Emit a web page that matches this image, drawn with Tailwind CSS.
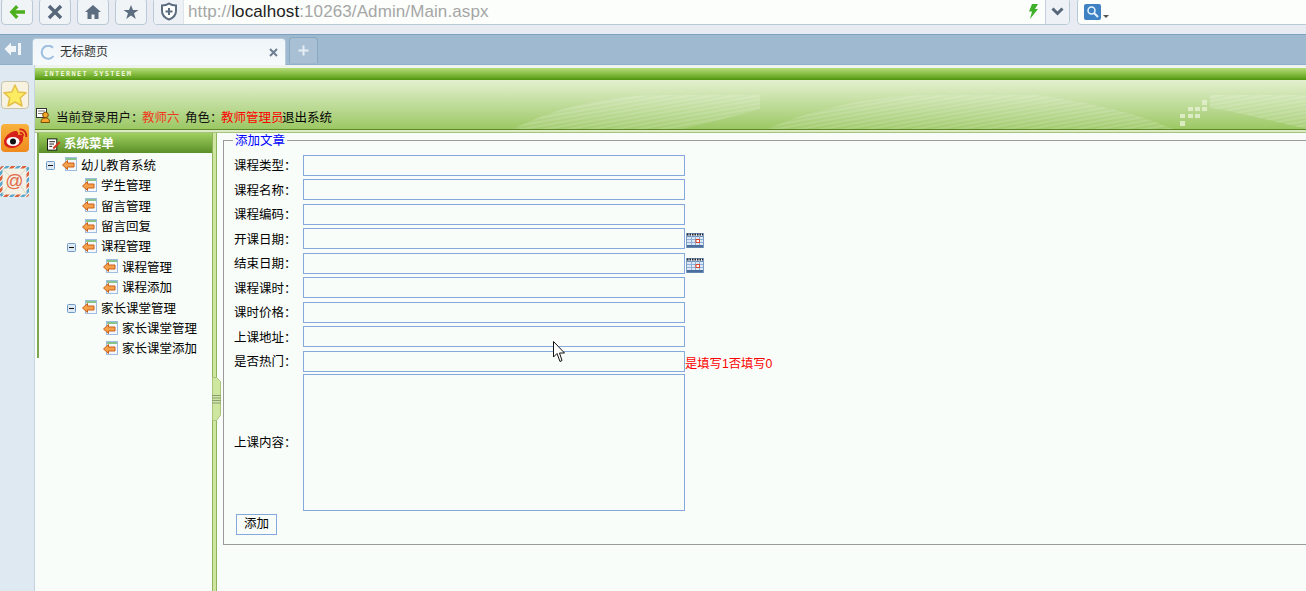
<!DOCTYPE html>
<html lang="zh-CN">
<head>
    <meta charset="UTF-8">
    <title>无标题页</title>
    <script src="https://cdn.jsdelivr.net/npm/@tailwindcss/browser@4"></script>
</head>
<body class="w-[1306px] h-[591px] overflow-hidden relative bg-[#f8fdf9] text-[12.5px] leading-[16px] text-black font-['Liberation_Sans','Noto_Sans_CJK_SC',sans-serif]">
    <svg class="hidden">
        <symbol id="tree-icon" viewBox="0 0 15 15">
            <rect x="3.500" y="0.500" width="11" height="13" fill="#f4f8fd" stroke="#9fbde0"/>
            <rect x="4" y="1" width="10" height="2" fill="#86c48a"/>
            <path d="M0.500 8 L5.500 3.500 V6 H12 V10 H5.500 V12.500 Z" fill="#f5a04a" stroke="#c9601a" stroke-width="1"/>
        </symbol>
        <symbol id="minus-box" viewBox="0 0 9 9">
            <rect x="0.500" y="0.500" width="8" height="8" rx="1" fill="#dfe9f4" stroke="#6f9ac8"/>
            <rect x="2" y="4" width="5" height="1" fill="#111"/>
        </symbol>
        <symbol id="calendar" viewBox="0 0 18 16">
            <rect x="0.500" y="1.500" width="17" height="14" fill="#dbe8f6" stroke="#7f9cc4"/>
            <path d="M1 2.500H17" stroke="#222" stroke-width="2" stroke-dasharray="1.500 1"/>
            <path d="M1 4.500H17" stroke="#6f8fbc"/>
            <path d="M1 7.500H17M1 10.500H17M5.500 4v11M9.500 4v11M13.500 4v11" stroke="#8fb0d8" fill="none"/>
            <rect x="10" y="7.500" width="3.500" height="3" fill="#fff" stroke="#d8452c"/>
            <rect x="1" y="13" width="16" height="2.500" fill="#4a6f9c"/>
        </symbol>
    </svg>

    <!-- browser toolbar -->
    <div class="h-[34px] bg-[#e8ecf2] flex items-start relative overflow-hidden">
        <div class="flex shrink-0 gap-[6px] pl-[1px] -mt-[2px]">
            <div class="w-[32px] h-[27px] rounded-[4px] border border-[#b9c9d8] bg-[#f1f4f7] flex items-center justify-center">
                <svg width="18" height="16" viewBox="0 0 18 16"><path d="M8 1 L1.500 8 L8 15 L10.500 12.500 L7.500 9.800 H17 V6.200 H7.500 L10.500 3.500 Z" fill="#4caf1e"/></svg>
            </div>
            <div class="w-[32px] h-[27px] rounded-[4px] border border-[#b9c9d8] bg-[#f1f4f7] flex items-center justify-center">
                <svg width="16" height="16" viewBox="0 0 16 16"><path d="M2 2 L14 14 M14 2 L2 14" stroke="#57677a" stroke-width="3.500"/></svg>
            </div>
            <div class="w-[32px] h-[27px] rounded-[4px] border border-[#b9c9d8] bg-[#f1f4f7] flex items-center justify-center">
                <svg width="18" height="16" viewBox="0 0 18 16"><path d="M9 1 L1 8 H3.500 V15 H7.500 V10.500 H10.500 V15 H14.500 V8 H17 Z" fill="#5d6d80"/></svg>
            </div>
            <div class="w-[32px] h-[27px] rounded-[4px] border border-[#b9c9d8] bg-[#f1f4f7] flex items-center justify-center">
                <svg width="16" height="16" viewBox="0 0 16 16"><path d="M8 1 L10 6 H15.500 L11 9.300 L12.800 15 L8 11.500 L3.200 15 L5 9.300 L0.500 6 H6 Z" fill="#5d6d80"/></svg>
            </div>
        </div>
        <div class="ml-[6px] -mt-[2px] shrink-0 w-[917px] h-[27px] rounded-[4px] border border-[#b9c9d8] bg-[#fbfefb] flex items-center overflow-hidden">
            <div class="w-[30px] h-full bg-[#eef2f6] flex items-center justify-center border-r border-[#dde4ea]">
                <svg width="18" height="19" viewBox="0 0 18 19"><path d="M9 1.500 C11 3 14 3.500 16 3.500 V9 C16 13 13 16 9 17.500 C5 16 2 13 2 9 V3.500 C4 3.500 7 3 9 1.500 Z" fill="#fff" stroke="#5d6d80" stroke-width="2"/><path d="M9 6 V13 M5.500 9.500 H12.500" stroke="#5d6d80" stroke-width="2"/></svg>
            </div>
            <div class="ml-[4px] text-[17px] leading-[22px] tracking-[0.1px] text-[#a6a6a6] whitespace-nowrap">http://<span class="text-[#222]">localhost</span>:10263/Admin/Main.aspx</div>
            <div class="ml-auto w-[25px] h-full flex items-center justify-center">
                <svg width="10" height="15" viewBox="0 0 10 15"><path d="M4 0 H10 L7 5 H10 L2 15 L4 7.500 H1 Z" fill="#3fb02a"/></svg>
            </div>
            <div class="w-[24px] h-full bg-[#eef2f6] border-l border-[#c3d0dc] flex items-center justify-center">
                <svg width="13" height="9" viewBox="0 0 13 9"><path d="M1.500 1.500 L6.500 6.500 L11.500 1.500" stroke="#57677a" stroke-width="3" fill="none"/></svg>
            </div>
        </div>
        <div class="ml-[7px] -mt-[2px] shrink-0 w-[240px] h-[27px] rounded-[4px] border border-[#b9c9d8] bg-[#fbfefb] flex items-center pl-[6px] gap-[2px]">
            <div class="w-[17px] h-[16px] rounded-[2px] bg-[#3f82c4] flex items-center justify-center">
                <svg width="13" height="13" viewBox="0 0 13 13"><circle cx="5.500" cy="5.500" r="3.500" fill="none" stroke="#e8f4ff" stroke-width="1.500"/><path d="M8 8 L12 12" stroke="#e8f4ff" stroke-width="2"/></svg>
            </div>
            <div class="mt-[10px] w-0 h-0 border-x-[3px] border-x-transparent border-t-[3px] border-t-[#555]"></div>
        </div>
    </div>

    <!-- tab strip -->
    <div class="h-[31px] bg-[#9fb9d0] border-t border-t-[#7ba0c0] border-b border-b-[#8db0cc] flex items-end relative">
        <div class="w-[32px] h-full flex items-center justify-center pb-[1px] pr-[6px]">
            <svg width="18" height="14" viewBox="0 0 18 14"><path d="M7 0.500 L0.500 7 L7 13.500 V10 H12 V4 H7 Z M14 1 H17 V13 H14 Z" fill="#f2f6f9"/></svg>
        </div>
        <div class="w-[254px] h-[27px] bg-gradient-to-b from-[#eff5f9] to-[#f6fafc] rounded-t-[4px] border border-b-0 border-[#b6cbdc] flex items-center pl-[7px] pr-[7px] -mb-[1px] text-[12px]">
            <svg width="15" height="15" viewBox="0 0 15 15"><path d="M13 2.800 A6.500 6.500 0 1 0 13.500 11" fill="none" stroke="#9fbfe0" stroke-width="2"/></svg>
            <span class="ml-[5px] text-[#333]">无标题页</span>
            <svg class="ml-auto" width="9" height="9" viewBox="0 0 9 9"><path d="M1 1 L8 8 M8 1 L1 8" stroke="#6d7f91" stroke-width="2"/></svg>
        </div>
        <div class="ml-[3px] w-[29px] h-[26px] bg-[#a9c0d4] rounded-t-[4px] border border-b-0 border-[#89a8c2] flex items-center justify-center mb-[1px]">
            <svg width="11" height="11" viewBox="0 0 11 11"><path d="M5.500 0.500 V10.500 M0.500 5.500 H10.500" stroke="#e6eef4" stroke-width="2"/></svg>
        </div>
    </div>

    <!-- window -->
    <div class="flex h-[526px]">
        <!-- side strip -->
        <div class="w-[35px] shrink-0 bg-[#dfe9f1] border-r border-[#c3d3e0] flex flex-col items-start pt-[16px] pl-[1px]">
            <div class="w-[28px] h-[28px] rounded-[4px] border border-[#c9c3ad] bg-[#f7f3e0] flex items-center justify-center">
                <svg width="24" height="23" viewBox="0 0 24 23"><path d="M12 1 L15.200 8 L23 8.800 L17.200 14 L19 22 L12 18 L5 22 L6.800 14 L1 8.800 L8.800 8 Z" fill="#fbec62" stroke="#e6bf4a" stroke-width="1.500" stroke-linejoin="round"/></svg>
            </div>
            <div class="mt-[15px] w-[28px] h-[28px] rounded-[4px] bg-gradient-to-b from-[#f8b23c] to-[#ef8a1e] flex items-center justify-center">
                <svg width="25" height="21" viewBox="0 0 25 21"><path d="M1 14 C1 9 7 3.500 12 3 C15 2.800 15.500 5 15 7 C18 6 20.500 7 20 10 C21 14 15 20 9.500 20 C5 20 1 18 1 14 Z" fill="#d6201a"/><ellipse cx="10" cy="13.500" rx="6.500" ry="4.500" fill="#fff"/><circle cx="10" cy="13.500" r="3" fill="#111"/><path d="M16.500 1.500 C21 1 24 4.500 23.200 9 M16.800 4.800 C18.800 4.500 20.500 6 20 8.200" stroke="#d6201a" stroke-width="1.800" fill="none"/></svg>
            </div>
            <svg class="mt-[14px] -ml-[1px]" width="29" height="31" viewBox="0 0 29 31">
                <defs>
                    <pattern id="airmail" width="8" height="8" patternUnits="userSpaceOnUse" patternTransform="rotate(45)">
                        <rect width="8" height="8" fill="#fff"/><rect width="3" height="8" fill="#d8603a"/><rect x="4" width="3" height="8" fill="#5aa5c8"/>
                    </pattern>
                </defs>
                <rect x="0" y="0" width="29" height="31" rx="3" fill="url(#airmail)"/>
                <rect x="2.500" y="2.500" width="24" height="26" fill="#f3f1e6"/>
                <path d="M3 3 L14.500 15 L26 3 M3 28 L12 14 M26 28 L17 14" fill="none" stroke="#dcd9c8"/>
                <text x="14.500" y="21" text-anchor="middle" font-size="18" font-family="Liberation Sans" fill="#e4694a">@</text>
            </svg>
        </div>

        <!-- page inside the browser -->
        <div class="flex-1 min-w-0 flex flex-col">
            <div class="h-[3px] bg-[#eef3ee]"></div>
            <div class="h-[12px] bg-gradient-to-b from-[#b4dc78] via-[#86bd40] to-[#4f9408] pl-[9px] flex items-center overflow-hidden">
                <span class="text-[7px] leading-[12px] font-bold tracking-[1.3px] text-[#eef6dc] font-['DejaVu_Sans_Mono',monospace]">INTERNET SYSTEEM</span>
            </div>
            <div class="h-[49px] relative bg-gradient-to-b from-[#e4f0cf] to-[#9cc863] flex items-end overflow-hidden">
                <svg class="absolute top-0 left-0" width="1271" height="49" viewBox="0 0 1271 49">
                    <defs>
                        <pattern id="stripes" width="14" height="4" patternUnits="userSpaceOnUse" patternTransform="rotate(-10)">
                            <rect width="14" height="2" fill="#ffffff" fill-opacity="0.12"/>
                        </pattern>
                    </defs>
                    <path d="M478 49 C520 28 570 15 630 15 H725 V29 C700 36 670 44 645 49 Z" fill="#ffffff" fill-opacity="0.1"/>
                    <path d="M478 49 C520 28 570 15 630 15 H725 V29 C700 36 670 44 645 49 Z" fill="url(#stripes)"/>
                    <path d="M732 49 C780 28 840 15 900 15 H1001 C1050 22 1100 32 1138 49 Z" fill="#ffffff" fill-opacity="0.08"/>
                    <path d="M732 49 C780 28 840 15 900 15 H1001 C1050 22 1100 32 1138 49 Z" fill="url(#stripes)"/>
                    <path d="M1175 15 H1271 V49 C1240 42 1205 32 1175 28 Z" fill="#ffffff" fill-opacity="0.12"/>
                    <path d="M1175 15 H1271 V49 C1240 42 1205 32 1175 28 Z" fill="url(#stripes)"/>
                    <g fill="#e4f0cf" fill-opacity="0.85">
                        <rect x="1167" y="20" width="5" height="5"/>
                        <rect x="1153" y="27" width="5" height="4"/><rect x="1160" y="27" width="5" height="4"/><rect x="1167" y="27" width="5" height="4"/>
                        <rect x="1145" y="34" width="5" height="4"/><rect x="1153" y="34" width="5" height="4"/><rect x="1160" y="34" width="5" height="4"/>
                        <rect x="1145" y="41" width="5" height="5"/>
                    </g>
                </svg>
                <div class="relative flex items-center h-[22px] whitespace-nowrap text-[#111]">
                    <svg class="ml-[1px] -mt-[5px]" width="14" height="15" viewBox="0 0 14 15"><rect x="0.500" y="0.500" width="10" height="9" fill="#fff" stroke="#333"/><path d="M2 3h7M2 5.500h5" stroke="#777"/><circle cx="9.500" cy="7" r="2.800" fill="#f4a72c" stroke="#7a4a00"/><path d="M5 14.500 C5 11 7 10 9.500 10 C12 10 13.500 11 13.500 14.500 Z" fill="#f4a72c" stroke="#7a4a00"/></svg>
                    <span class="ml-[6px]">当前登录用户：</span><span class="text-[#f0391c] -ml-[1.500px]">教师六</span><span class="ml-[5.500px]">角色：</span><span class="text-[#ff0000] -ml-[1.500px]">教师管理员</span><span class="-ml-[1.500px] text-black">退出系统</span>
                </div>
            </div>
            <div class="h-[4px] border-t border-t-[#5c8a2a] border-b border-b-[#a5c27f] bg-[#dcebc4]"></div>

            <div class="flex flex-1 min-h-0">
                <!-- tree menu -->
                <div class="w-[175px] shrink-0 h-[225px] ml-[2px] border-l-2 border-[#7ea84e]">
                    <div class="w-[173px] h-[20px] bg-gradient-to-b from-[#a0d060] to-[#5c9028] flex items-center pl-[8px] pt-[2px] gap-[3px] text-white font-bold">
                        <svg width="14" height="13" viewBox="0 0 15 13"><rect x="0.500" y="0.500" width="10" height="12" fill="#fff" stroke="#111"/><path d="M2.500 3.500h6M2.500 6h5M2.500 8.500h3" stroke="#111"/><path d="M6 10 L13 3 L14.500 4.500 L7.500 11.500 Z" fill="#d6371d"/></svg>
                        <span>系统菜单</span>
                    </div>
                    <ul class="pt-[2.700px]">
                        <li class="h-[20.400px] flex items-center pl-[7px]"><svg width="9" height="9"><use href="#minus-box"/></svg><svg class="ml-[7px] -mt-[2px]" width="15" height="15"><use href="#tree-icon"/></svg><span class="ml-[4px]">幼儿教育系统</span></li>
                        <li class="h-[20.400px] flex items-center pl-[43px]"><svg class="-mt-[2px]" width="15" height="15"><use href="#tree-icon"/></svg><span class="ml-[4px]">学生管理</span></li>
                        <li class="h-[20.400px] flex items-center pl-[43px]"><svg class="-mt-[2px]" width="15" height="15"><use href="#tree-icon"/></svg><span class="ml-[4px]">留言管理</span></li>
                        <li class="h-[20.400px] flex items-center pl-[43px]"><svg class="-mt-[2px]" width="15" height="15"><use href="#tree-icon"/></svg><span class="ml-[4px]">留言回复</span></li>
                        <li class="h-[20.400px] flex items-center pl-[28px]"><svg width="9" height="9"><use href="#minus-box"/></svg><svg class="ml-[6px] -mt-[2px]" width="15" height="15"><use href="#tree-icon"/></svg><span class="ml-[4px]">课程管理</span></li>
                        <li class="h-[20.400px] flex items-center pl-[64px]"><svg class="-mt-[2px]" width="15" height="15"><use href="#tree-icon"/></svg><span class="ml-[4px]">课程管理</span></li>
                        <li class="h-[20.400px] flex items-center pl-[64px]"><svg class="-mt-[2px]" width="15" height="15"><use href="#tree-icon"/></svg><span class="ml-[4px]">课程添加</span></li>
                        <li class="h-[20.400px] flex items-center pl-[28px]"><svg width="9" height="9"><use href="#minus-box"/></svg><svg class="ml-[6px] -mt-[2px]" width="15" height="15"><use href="#tree-icon"/></svg><span class="ml-[4px]">家长课堂管理</span></li>
                        <li class="h-[20.400px] flex items-center pl-[64px]"><svg class="-mt-[2px]" width="15" height="15"><use href="#tree-icon"/></svg><span class="ml-[4px]">家长课堂管理</span></li>
                        <li class="h-[20.400px] flex items-center pl-[64px]"><svg class="-mt-[2px]" width="15" height="15"><use href="#tree-icon"/></svg><span class="ml-[4px]">家长课堂添加</span></li>
                    </ul>
                </div>

                <!-- split bar -->
                <div class="w-[5px] shrink-0 bg-[#cfe6a0] border-x border-[#8fb35a] relative">
                    <svg class="absolute top-[244px] -left-[1px]" width="9" height="44" viewBox="0 0 9 44">
                        <path d="M0.500 0.500 H4.500 L8.500 4.500 V38 L4.500 43.500 H0.500 Z" fill="#cfe6a0" stroke="#a9c67a"/>
                        <path d="M0 18.500H9M0 21H9M0 23.500H9M0 26H9" stroke="#8a9c74"/>
                    </svg>
                </div>

                <!-- form -->
                <div class="flex-1 min-w-0 overflow-hidden pl-[6px]">
                    <fieldset class="-mt-[2px] w-[1200px] h-[414px] border border-[#9a9a9a] border-r-0 pl-[10px]">
                        <legend class="-ml-[1px] px-[2px] pt-[2px] text-[#0000ff]">添加文章</legend>
                        <form class="pt-[5.800px]">
                            <div class="flex items-center h-[21px] mb-[3.500px]"><label class="w-[69px] mt-[2px]">课程类型：</label><input type="text" class="w-[382px] h-[21px] border border-[#85a9dc] bg-transparent"></div>
                            <div class="flex items-center h-[21px] mb-[3.500px]"><label class="w-[69px] mt-[2px]">课程名称：</label><input type="text" class="w-[382px] h-[21px] border border-[#85a9dc] bg-transparent"></div>
                            <div class="flex items-center h-[21px] mb-[3.500px]"><label class="w-[69px] mt-[2px]">课程编码：</label><input type="text" class="w-[382px] h-[21px] border border-[#85a9dc] bg-transparent"></div>
                            <div class="flex items-center h-[21px] mb-[3.500px]"><label class="w-[69px] mt-[2px]">开课日期：</label><input type="text" class="w-[382px] h-[21px] border border-[#85a9dc] bg-transparent"><svg class="ml-px mt-[3px]" width="18" height="16"><use href="#calendar"/></svg></div>
                            <div class="flex items-center h-[21px] mb-[3.500px]"><label class="w-[69px] mt-[2px]">结束日期：</label><input type="text" class="w-[382px] h-[21px] border border-[#85a9dc] bg-transparent"><svg class="ml-px mt-[3px]" width="18" height="16"><use href="#calendar"/></svg></div>
                            <div class="flex items-center h-[21px] mb-[3.500px]"><label class="w-[69px] mt-[2px]">课程课时：</label><input type="text" class="w-[382px] h-[21px] border border-[#85a9dc] bg-transparent"></div>
                            <div class="flex items-center h-[21px] mb-[3.500px]"><label class="w-[69px] mt-[2px]">课时价格：</label><input type="text" class="w-[382px] h-[21px] border border-[#85a9dc] bg-transparent"></div>
                            <div class="flex items-center h-[21px] mb-[3.500px]"><label class="w-[69px] mt-[2px]">上课地址：</label><input type="text" class="w-[382px] h-[21px] border border-[#85a9dc] bg-transparent"></div>
                            <div class="flex items-center h-[21px] mb-[2px]"><label class="w-[69px] mt-[2px]">是否热门：</label><input type="text" class="w-[382px] h-[21px] border border-[#85a9dc] bg-transparent"><span class="text-[12.300px] text-[#ff0000] mt-[5px]">是填写1否填写0</span></div>
                            <div class="flex items-center"><label class="w-[69px] mt-[2px]">上课内容：</label><textarea class="w-[382px] h-[137px] border border-[#85a9dc] bg-transparent resize-none"></textarea></div>
                            <button type="button" class="block ml-[2px] mt-[3px] w-[41px] h-[21px] border border-[#85a9dc] bg-transparent">添加</button>
                        </form>
                    </fieldset>
                </div>
            </div>
        </div>
    </div>

    <!-- mouse pointer from the capture -->
    <svg class="absolute left-[553px] top-[341px]" width="14" height="22" viewBox="0 0 14 22"><path d="M0.500 0.500 V16 L4 12.500 L7 20.500 L9 19.500 L6.500 12 H11.500 Z" fill="#fff" stroke="#111"/></svg>
</body>
</html>
